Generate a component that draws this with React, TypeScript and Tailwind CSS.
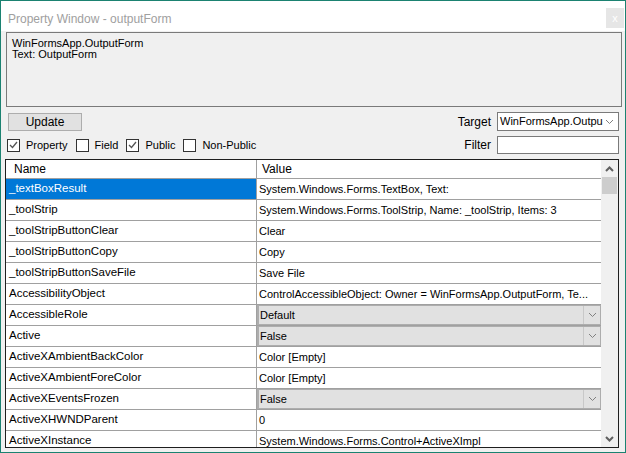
import * as React from 'react';

type Row = { name: string; value: string; combo?: boolean };

const rows: Row[] = [
	{ name: '_textBoxResult', value: 'System.Windows.Forms.TextBox, Text:' },
	{ name: '_toolStrip', value: 'System.Windows.Forms.ToolStrip, Name: _toolStrip, Items: 3' },
	{ name: '_toolStripButtonClear', value: 'Clear' },
	{ name: '_toolStripButtonCopy', value: 'Copy' },
	{ name: '_toolStripButtonSaveFile', value: 'Save File' },
	{ name: 'AccessibilityObject', value: 'ControlAccessibleObject: Owner = WinFormsApp.OutputForm, Te...' },
	{ name: 'AccessibleRole', value: 'Default', combo: true },
	{ name: 'Active', value: 'False', combo: true },
	{ name: 'ActiveXAmbientBackColor', value: 'Color [Empty]' },
	{ name: 'ActiveXAmbientForeColor', value: 'Color [Empty]' },
	{ name: 'ActiveXEventsFrozen', value: 'False', combo: true },
	{ name: 'ActiveXHWNDParent', value: '0' },
	{ name: 'ActiveXInstance', value: 'System.Windows.Forms.Control+ActiveXImpl' },
];

function Chevron({ up = false, bold = false }: { up?: boolean; bold?: boolean }) {
	return (
		<svg width="9" height="6" viewBox="0 0 9 6" className="shrink-0">
			<path
				d={up ? 'M1 5 L4.5 1.5 L8 5' : 'M1 1 L4.5 4.5 L8 1'}
				fill="none"
				stroke={bold ? '#606060' : '#808080'}
				strokeWidth={bold ? 2 : 1}
			/>
		</svg>
	);
}

function CheckBox({ checked, label }: { checked: boolean; label: string }) {
	return (
		<label className="flex items-center gap-[6px] mr-[8px]">
			<span className="w-[13px] h-[13px] border border-[#333333] bg-white flex items-center justify-center">
				{checked && (
					<svg width="9" height="8" viewBox="0 0 9 8">
						<path d="M1 4 L3.5 6.5 L8 1" fill="none" stroke="#555555" strokeWidth="1.3" />
					</svg>
				)}
			</span>
			<span>{label}</span>
		</label>
	);
}

export default function App() {
	return (
		<div
			className="w-[626px] h-[453px] border border-[#1b8271] bg-[#f0f0f0] flex flex-col text-[11px] text-black overflow-hidden"
			style={{ fontFamily: '"Liberation Sans", Arial, sans-serif' }}
		>
			{/* title bar */}
			<div className="h-[30px] bg-white flex items-start justify-between pl-[7px] pr-[1px] shrink-0">
				<span className="mt-[9px] text-[#a0a0a0] text-[12px]">Property Window - outputForm</span>
				<div className="mt-[7px] w-[18px] h-[20px] bg-[#e6e6e6] text-white text-[11px] flex items-center justify-center">
					x
				</div>
			</div>

			{/* info text */}
			<div className="ml-[5px] mt-[1px] w-[616px] h-[75px] border border-[#7a7a7a] bg-[#f0f0f0] px-[5px] pt-[5px] leading-[11px]">
				<div>WinFormsApp.OutputForm</div>
				<div>Text: OutputForm</div>
			</div>

			{/* update + target */}
			<div className="flex items-center justify-between mt-[5px] pl-[7px] pr-[6px]">
				<button className="w-[74px] h-[18px] bg-[#e1e1e1] border border-[#adadad] leading-none text-[12px]">
					Update
				</button>
				<div className="flex items-center gap-[6px]">
					<span className="text-[12px]">Target</span>
					<div className="w-[122px] h-[19px] bg-white border border-[#7a7a7a] flex items-center justify-between pl-[2px] pr-[4px]">
						<span className="whitespace-nowrap">WinFormsApp.Outpu</span>
						<Chevron />
					</div>
				</div>
			</div>

			{/* checkboxes + filter */}
			<div className="flex items-center justify-between mt-[5px] pl-[6px] pr-[6px]">
				<div className="flex items-center text-[11px]">
					<CheckBox checked label="Property" />
					<CheckBox checked={false} label="Field" />
					<CheckBox checked label="Public" />
					<CheckBox checked={false} label="Non-Public" />
				</div>
				<div className="flex items-center gap-[6px]">
					<span className="text-[12px]">Filter</span>
					<div className="w-[122px] h-[18px] bg-white border border-[#7a7a7a]" />
				</div>
			</div>

			{/* property grid */}
			<div className="ml-[4px] mt-[5px] w-[614px] h-[289px] border border-[#1e1e1e] bg-white flex overflow-hidden">
				<div className="flex-1 flex flex-col overflow-hidden">
					<div className="flex h-[19px] shrink-0 border-b border-[#a0a0a0] items-center text-[12px]">
						<div className="w-[251px] pl-[8px] border-r border-[#a0a0a0] h-full flex items-center">Name</div>
						<div className="flex-1 pl-[5px]">Value</div>
					</div>
					{rows.map((r, i) => (
						<div key={r.name} className="flex h-[21px] shrink-0 border-b border-[#a0a0a0] text-[11.5px]">
							<div
								className={
									i === 0
										? 'w-[251px] pl-[3px] border-r border-[#a0a0a0] flex items-center bg-[#0078d7] text-white'
										: 'w-[251px] pl-[3px] border-r border-[#a0a0a0] flex items-center'
								}
							>
								{r.name}
							</div>
							{r.combo ? (
								<div className="flex-1 flex bg-[#e1e1e1] border border-[#adadad] border-l-2 text-[11px]">
									<div className="flex-1 pl-[1px] flex items-center">{r.value}</div>
									<div className="w-[17px] border-l border-[#c8c8c8] flex items-center justify-center">
										<Chevron />
									</div>
								</div>
							) : (
								<div className="flex-1 pl-[2px] flex items-center whitespace-nowrap overflow-hidden text-[11px]">
									{r.value}
								</div>
							)}
						</div>
					))}
				</div>
				<div className="w-[17px] bg-[#f0f0f0] flex flex-col items-center justify-between shrink-0">
					<div className="flex flex-col items-center w-full">
						<div className="h-[17px] flex items-center justify-center">
							<Chevron up bold />
						</div>
						<div className="w-[15px] h-[17px] bg-[#cdcdcd]" />
					</div>
					<div className="h-[17px] flex items-center justify-center">
						<Chevron bold />
					</div>
				</div>
			</div>
		</div>
	);
}
